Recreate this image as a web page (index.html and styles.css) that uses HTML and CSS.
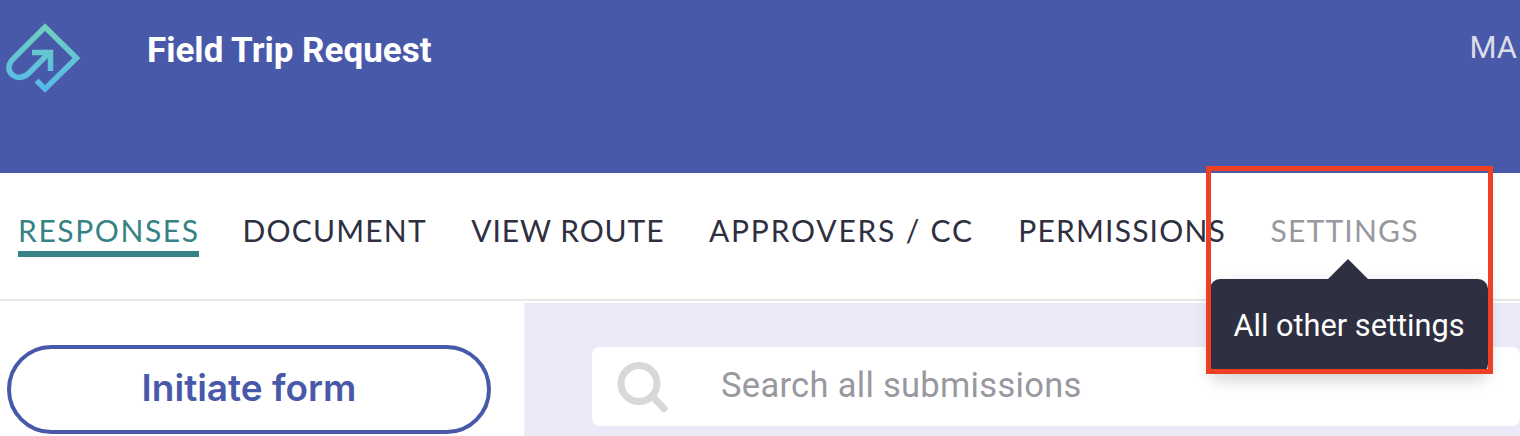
FILE: index.html
```html
<!DOCTYPE html>
<html lang="en">
<head>
<meta charset="utf-8">
<title>Field Trip Request</title>
<link rel="stylesheet" href="styles.css">
</head>
<body>
<div class="page">
  <header class="topbar">
    <svg class="logo" width="90" height="100" viewBox="0 0 90 100" fill="none">
      <defs>
        <linearGradient id="lg" x1="45" y1="22" x2="45" y2="93" gradientUnits="userSpaceOnUse">
          <stop offset="0" stop-color="#70d2b8"/>
          <stop offset="1" stop-color="#55b8ee"/>
        </linearGradient>
      </defs>
      <path d="M36.500 80.500 L45 89 L76.500 58 L45 27 L14 58 C7 65 8 71 12 74.500 C17 79 24 78 29 73 L50 52" stroke="url(#lg)" stroke-width="5.500"/>
      <path d="M32 52.500 H50.500 V71" stroke="url(#lg)" stroke-width="5.500"/>
    </svg>
    <h1 class="title">Field Trip Request</h1>
    <span class="user">MA</span>
  </header>
  <nav class="tabs">
    <a class="tab active">RESPONSES</a>
    <a class="tab">DOCUMENT</a>
    <a class="tab tab-tight">VIEW ROUTE</a>
    <a class="tab tab-wide">APPROVERS / CC</a>
    <a class="tab">PERMISSIONS</a>
    <a class="tab muted">SETTINGS</a>
  </nav>
  <main class="content">
    <aside class="sidebar">
      <button class="initiate">Initiate form</button>
    </aside>
    <section class="panel">
      <div class="search">
        <svg class="search-icon" width="56" height="52" viewBox="0 0 56 52" fill="none">
          <circle cx="25" cy="22.500" r="18" stroke="#d8d8d8" stroke-width="7"/>
          <path d="M39 36 L50 47.500" stroke="#d8d8d8" stroke-width="7" stroke-linecap="round"/>
        </svg>
        <span class="search-text">Search all submissions</span>
      </div>
    </section>
  </main>
  <div class="tooltip">
    <span class="tooltip-arrow"></span>
    All other settings
  </div>
  <div class="highlight"></div>
</div>
</body>
</html>
```
FILE: styles.css
```css
html, body {
  margin: 0;
  padding: 0;
  background: #fff;
}
.page {
  position: relative;
  width: 1520px;
  height: 436px;
  overflow: hidden;
  font-family: "Roboto", sans-serif;
}
.topbar {
  box-sizing: border-box;
  height: 173px;
  background: #4859aa;
  display: flex;
  align-items: flex-start;
}
.logo {
  flex: none;
}
.title {
  margin: 29px 0 0 57px;
  font-size: 35px;
  line-height: 44px;
  font-weight: 700;
  color: #fff;
}
.user {
  margin-left: auto;
  margin-top: 26px;
  margin-right: 3px;
  font-size: 31px;
  line-height: 44px;
  color: #dcdde6;
  white-space: nowrap;
}
.tabs {
  box-sizing: border-box;
  height: 128px;
  padding: 40px 0 0 18px;
  display: flex;
  gap: 44.500px;
  border-bottom: 2px solid #e8e8e8;
}
.tab {
  font-family: "Lato", sans-serif;
  font-size: 30px;
  line-height: 34px;
  height: 44px;
  letter-spacing: 1.2px;
  color: #2e2f40;
  box-sizing: border-box;
  white-space: nowrap;
}
.tab.active {
  width: 181px;
  margin-right: -1px;
  letter-spacing: 1.6px;
  color: #378286;
  border-bottom: 6px solid #378286;
}
.tab.tab-tight {
  letter-spacing: 0.9px;
}
.tab.tab-wide {
  letter-spacing: 1.8px;
}
.tab.muted {
  color: #98989f;
}
.content {
  display: flex;
  height: 135px;
}
.sidebar {
  box-sizing: border-box;
  width: 525px;
  flex: none;
  padding: 44px 0 0 7px;
  border-right: 1px solid #f0f0f0;
}
.initiate {
  box-sizing: border-box;
  width: 484px;
  height: 89px;
  border: 4px solid #4859aa;
  border-radius: 45px;
  background: #fff;
  color: #4859aa;
  font-family: "Inter", sans-serif;
  font-size: 37px;
  font-weight: 600;
  padding: 0 0 4px;
}
.panel {
  flex: 1;
  margin-top: 2px;
  background: #ebeaf8;
  padding: 44px 0 0 67px;
}
.search {
  height: 79px;
  background: #fff;
  border-radius: 8px;
  display: flex;
  align-items: center;
  padding-left: 22px;
}
.search-icon {
  flex: none;
}
.search-text {
  margin-left: 51px;
  font-size: 34.500px;
  line-height: 40px;
  padding-bottom: 3px;
  color: #98989f;
  letter-spacing: 0.3px;
}
.tooltip {
  position: absolute;
  left: 1210px;
  top: 279px;
  width: 278px;
  height: 95px;
  box-sizing: border-box;
  padding-top: 28px;
  text-align: center;
  background: #2e2f40;
  color: #fff;
  border-radius: 10px;
  font-size: 30.700px;
  line-height: 38px;
  box-shadow: 0 6px 16px rgba(0, 0, 0, 0.18);
}
.tooltip-arrow {
  position: absolute;
  left: 118px;
  top: -20px;
  border-left: 20px solid transparent;
  border-right: 20px solid transparent;
  border-bottom: 20px solid #2e2f40;
}
.highlight {
  position: absolute;
  left: 1206px;
  top: 166px;
  width: 287px;
  height: 208px;
  box-sizing: border-box;
  border: 5px solid #ef4023;
}
```
